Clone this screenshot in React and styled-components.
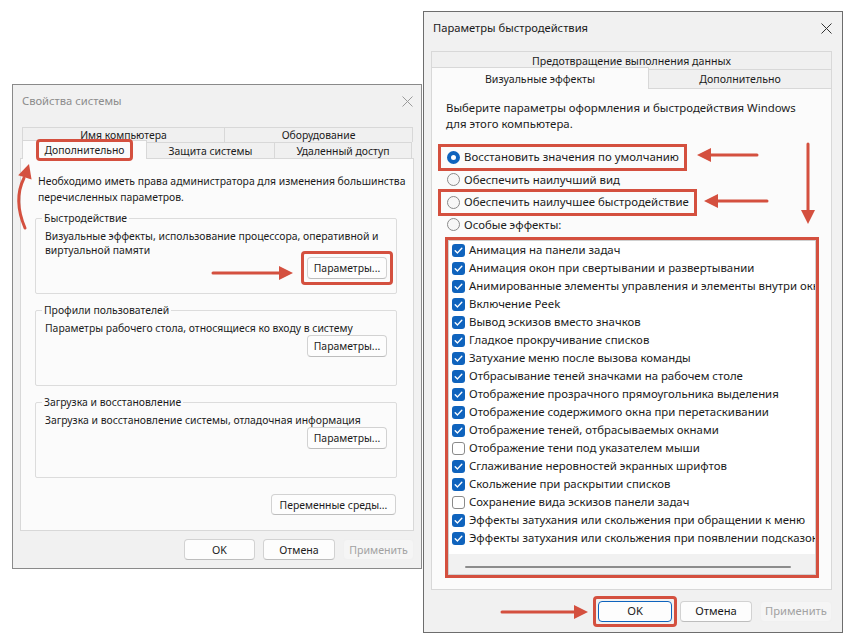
import React from 'react'
import styled, { createGlobalStyle, css } from 'styled-components'

const RED = '#d4503f'
const BLUE = '#0f63bd'

const GlobalStyle = createGlobalStyle`
  html, body { margin: 0; padding: 0; background: #fff; }
  body { font-family: "Noto Sans", "Open Sans", sans-serif; color: #1b1b1b; }
  * { box-sizing: border-box; }
`

const marked = css`
  outline: 3px solid ${RED};
  outline-offset: ${p => p.$off || 0}px;
`

// red annotation frame around a control, square-cornered, not affecting flow
const Mark = styled.span`
  display: inline-flex;
  padding: ${p => p.$pad};
  margin: ${p => p.$m};
  border-radius: 1px;
  outline: 3px solid ${RED};
`

const Canvas = styled.div`
  position: relative;
  width: 857px;
  height: 644px;
  overflow: hidden;
  background: #fff;
`

// windows sit on a free desktop canvas
const Window = styled.div`
  position: absolute;
  left: ${p => p.$x}px;
  top: ${p => p.$y}px;
  width: ${p => p.$w}px;
  display: flex;
  flex-direction: column;
  background: #f1f1f1;
  border: 1px solid ${p => (p.$active ? '#6d6d6d' : '#8a8a8a')};
  padding: 0 ${p => p.$pr}px 0 7px;
  font-size: ${p => p.$fs}px;
  line-height: ${p => p.$lh}px;
`

const TitleBar = styled.div`
  height: 32px;
  display: flex;
  align-items: center;
  justify-content: space-between;
  padding-left: ${p => p.$pl}px;
  font-size: 11.2px;
  color: ${p => (p.$dim ? '#8c8c8c' : '#1a1a1a')};
`

const Close = ({ color }) => (
  <svg width="11" height="11" viewBox="0 0 11 11">
    <path d="M0.5 0.5 L10.5 10.5 M10.5 0.5 L0.5 10.5" stroke={color} strokeWidth="1" fill="none" />
  </svg>
)

const CloseSlot = styled.span`
  display: flex;
  margin-right: ${p => p.$mr}px;
`

const Tabs = styled.div`
  display: flex;
  flex-direction: column;
  margin-top: ${p => p.$mt}px;
  padding-left: ${p => p.$pl || 0}px;
  font-size: ${p => p.$fs}px;
`

const TabRow = styled.div`
  display: flex;
  height: ${p => p.$h}px;
`

const Tab = styled.div`
  width: ${p => p.$w}px;
  display: flex;
  align-items: center;
  justify-content: center;
  border: 1px solid #d8d8d8;
  border-bottom: none;
  margin-left: -1px;
  background: ${p => (p.$active ? '#fbfbfb' : '#f0f0f0')};
  white-space: nowrap;
  ${p =>
    p.$active &&
    css`
      margin-top: -2px;
      margin-bottom: -1px;
      z-index: 1;
    `}
  &:first-child { margin-left: 0; }
`

const Panel = styled.div`
  height: ${p => p.$h}px;
  display: flex;
  flex-direction: column;
  background: #fbfbfb;
  border: 1px solid #d8d8d8;
  padding: ${p => p.$pad};
`

const Footer = styled.div`
  height: ${p => p.$h}px;
  display: flex;
  align-items: center;
  justify-content: flex-end;
  gap: 8px;
`

const Button = styled.button`
  font: inherit;
  font-size: ${p => p.$fs || 11.2}px;
  height: ${p => p.$h || 21}px;
  width: ${p => p.$w}px;
  padding: 0;
  border-radius: 4px;
  color: #1b1b1b;
  background: #fdfdfd;
  border: 1px solid #d2d2d2;
  border-bottom-color: #bdbdbd;
  ${p =>
    p.$default &&
    css`
      border: 1.5px solid ${BLUE};
    `}
  ${p =>
    p.$disabled &&
    css`
      color: #a2a2a2;
      background: #f5f5f5;
      border-color: #f0f0f0;
    `}
`

/* ---------- left window ---------- */

const Intro = styled.p`
  margin: 0;
  white-space: nowrap;
`

const Group = styled.fieldset`
  margin: ${p => p.$mt}px 0 0 -3px;
  width: 362px;
  height: 84px;
  padding: 0 9px 8px 9px;
  border: 1px solid #dcdcdc;
  border-radius: 2px;
  display: flex;
  flex-direction: column;
`

const Legend = styled.legend`
  padding: 0 2px;
  margin-left: -3px;
  line-height: 16px;
`

const GroupText = styled.p`
  margin: 3px 0 0;
  line-height: 14px;
  white-space: nowrap;
`

const GroupActions = styled.div`
  margin-top: auto;
  display: flex;
  justify-content: flex-end;
`

const EnvRow = styled.div`
  display: flex;
  justify-content: flex-end;
  width: 358px;
  margin-top: 16px;
`

/* ---------- right window ---------- */

const Radios = styled.div`
  display: flex;
  flex-direction: column;
  align-items: flex-start;
  margin-top: 14px;
`

const RadioRow = styled.div`
  height: 22.5px;
  display: flex;
  align-items: center;
  gap: 4px;
  margin-left: -6px;
  padding: 0 6px 0 7px;
  white-space: nowrap;
  ${p => p.$mark && marked}
`

const RadioDot = styled.span`
  width: 13px;
  height: 13px;
  border-radius: 50%;
  flex: none;
  ${p =>
    p.$on
      ? css`
          border: 4px solid ${BLUE};
          background: #fff;
        `
      : css`
          border: 1px solid #8a8a8a;
          background: #f7f7f7;
        `}
`

const List = styled.div`
  width: 368px;
  height: 335px;
  margin: 4px 0 0 2px;
  background: #fff;
  border: 1px solid #d0d0d0;
  display: flex;
  flex-direction: column;
  overflow: hidden;
  ${marked}
`

const Item = styled.div`
  height: 18px;
  flex: none;
  display: flex;
  align-items: center;
  gap: 4px;
  padding-left: 3px;
  white-space: nowrap;
`

const Box = styled.span`
  width: 13px;
  height: 13px;
  flex: none;
  border-radius: 3px;
  display: flex;
  align-items: center;
  justify-content: center;
  ${p =>
    p.$on
      ? css`
          background: ${BLUE};
        `
      : css`
          border: 1px solid #8a8a8a;
          background: #fff;
        `}
`

const Scroll = styled.div`
  margin-top: auto;
  height: 20px;
  flex: none;
  background: #f1f1f1;
  display: flex;
  align-items: center;
  padding: 0 24px 0 16px;
`

const Thumb = styled.div`
  flex: 1;
  height: 2px;
  margin-top: 6px;
  background: #8c8c8c;
  border-radius: 1px;
`

const Overlay = styled.svg`
  position: absolute;
  left: 0;
  top: 0;
  width: 857px;
  height: 644px;
  pointer-events: none;
`

const Check = () => (
  <svg width="9" height="9" viewBox="0 0 9 9">
    <path d="M1.2 4.7 L3.5 6.9 L7.8 2.2" stroke="#fff" strokeWidth="1.4" fill="none" strokeLinecap="round" strokeLinejoin="round" />
  </svg>
)

const head = (tx, ty, dx, dy) => {
  const len = Math.hypot(dx, dy)
  const ux = dx / len
  const uy = dy / len
  const L = 14
  const W = 7
  const bx = tx - ux * L
  const by = ty - uy * L
  return `${tx},${ty} ${bx - uy * W},${by + ux * W} ${bx + uy * W},${by - ux * W}`
}

const Arrow = ({ x1, y1, x2, y2 }) => {
  const dx = x2 - x1
  const dy = y2 - y1
  const len = Math.hypot(dx, dy)
  const ex = x2 - (dx / len) * 12
  const ey = y2 - (dy / len) * 12
  return (
    <g>
      <line x1={x1} y1={y1} x2={ex} y2={ey} stroke={RED} strokeWidth="3" strokeLinecap="round" />
      <polygon points={head(x2, y2, dx, dy)} fill={RED} />
    </g>
  )
}

const effects = [
  ['Анимация на панели задач', true],
  ['Анимация окон при свертывании и развертывании', true],
  ['Анимированные элементы управления и элементы внутри окна', true],
  ['Включение Peek', true],
  ['Вывод эскизов вместо значков', true],
  ['Гладкое прокручивание списков', true],
  ['Затухание меню после вызова команды', true],
  ['Отбрасывание теней значками на рабочем столе', true],
  ['Отображение прозрачного прямоугольника выделения', true],
  ['Отображение содержимого окна при перетаскивании', true],
  ['Отображение теней, отбрасываемых окнами', true],
  ['Отображение тени под указателем мыши', false],
  ['Сглаживание неровностей экранных шрифтов', true],
  ['Скольжение при раскрытии списков', true],
  ['Сохранение вида эскизов панели задач', false],
  ['Эффекты затухания или скольжения при обращении к меню', true],
  ['Эффекты затухания или скольжения при появлении подсказок', true],
]

const radios = [
  ['Восстановить значения по умолчанию', true, true],
  ['Обеспечить наилучший вид', false, false],
  ['Обеспечить наилучшее быстродействие', false, true],
  ['Особые эффекты:', false, false],
]

const groups = [
  {
    title: 'Быстродействие',
    lines: ['Визуальные эффекты, использование процессора, оперативной и', 'виртуальной памяти'],
    mark: true,
    mt: 5,
  },
  { title: 'Профили пользователей', lines: ['Параметры рабочего стола, относящиеся ко входу в систему'], mt: 8 },
  { title: 'Загрузка и восстановление', lines: ['Загрузка и восстановление системы, отладочная информация'], mt: 8 },
]

const SettingsButton = ({ mark }) => {
  const btn = (
    <Button $w={80} $h={22} $fs={10.4}>
      Параметры...
    </Button>
  )
  return mark ? (
    <Mark $pad="3px" $m="-3px">
      {btn}
    </Mark>
  ) : (
    btn
  )
}

const SystemProperties = () => (
  <Window $x={12} $y={84} $w={410} $pr={7} $fs={10.4} $lh={16}>
    <TitleBar $dim $pl={2}>
      Свойства системы
      <CloseSlot $mr={1}>
        <Close color="#9a9a9a" />
      </CloseSlot>
    </TitleBar>
    <Tabs $mt={10} $pl={2} $fs={10.4}>
      <TabRow $h={15}>
        <Tab $w={203}>Имя компьютера</Tab>
        <Tab $w={189}>Оборудование</Tab>
      </TabRow>
      <TabRow $h={16}>
        <Tab $w={125} $active>
          <Mark $pad="0 6px" $m="0">
            Дополнительно
          </Mark>
        </Tab>
        <Tab $w={129}>Защита системы</Tab>
        <Tab $w={138}>Удаленный доступ</Tab>
      </TabRow>
    </Tabs>
    <Panel $h={373} $pad="14px 6px 0 17px">
      <Intro>
        Необходимо иметь права администратора для изменения большинства
        <br />
        перечисленных параметров.
      </Intro>
      {groups.map(g => (
        <Group key={g.title} $mt={g.mt}>
          <Legend>{g.title}</Legend>
          <GroupText>
            {g.lines.map((l, i) => (
              <React.Fragment key={l}>
                {i > 0 && <br />}
                {l}
              </React.Fragment>
            ))}
          </GroupText>
          <GroupActions>
            <SettingsButton mark={g.mark} />
          </GroupActions>
        </Group>
      ))}
      <EnvRow>
        <Button $w={125} $fs={10.4}>
          Переменные среды...
        </Button>
      </EnvRow>
    </Panel>
    <Footer $h={37}>
      <Button $w={71} $fs={10.6}>OK</Button>
      <Button $w={72} $fs={10.6}>Отмена</Button>
      <Button $w={71} $fs={10.6} $disabled>
        Применить
      </Button>
    </Footer>
  </Window>
)

const PerformanceOptions = () => (
  <Window $x={423} $y={11} $w={420} $pr={10} $fs={11.4} $lh={16} $active>
    <TitleBar $pl={2}>
      Параметры быстродействия
      <CloseSlot $mr={0}>
        <Close color="#333" />
      </CloseSlot>
    </TitleBar>
    <Tabs $mt={7} $fs={10.6}>
      <TabRow $h={18}>
        <Tab $w={401}>Предотвращение выполнения данных</Tab>
      </TabRow>
      <TabRow $h={19}>
        <Tab $w={218} $active>
          Визуальные эффекты
        </Tab>
        <Tab $w={184}>Дополнительно</Tab>
      </TabRow>
    </Tabs>
    <Panel $h={502} $pad="11px 14px 0 14px">
      <Intro>
        Выберите параметры оформления и быстродействия Windows
        <br />
        для этого компьютера.
      </Intro>
      <Radios>
        {radios.map(([label, on, mark]) => (
          <RadioRow key={label} $mark={mark} $off={-1}>
            <RadioDot $on={on} />
            {label}
          </RadioRow>
        ))}
      </Radios>
      <List>
        {effects.map(([label, on]) => (
          <Item key={label}>
            <Box $on={on}>{on && <Check />}</Box>
            {label}
          </Item>
        ))}
        <Scroll>
          <Thumb />
        </Scroll>
      </List>
    </Panel>
    <Footer $h={42}>
      <Mark $pad="2px" $m="-2px">
        <Button $w={74} $default>
          OK
        </Button>
      </Mark>
      <Button $w={72}>Отмена</Button>
      <Button $w={72} $disabled>
        Применить
      </Button>
    </Footer>
  </Window>
)

export default function App() {
  return (
    <Canvas>
      <GlobalStyle />
      <SystemProperties />
      <PerformanceOptions />
      <Overlay viewBox="0 0 857 644">
        <path d="M25 228 Q13 200 24 178" stroke={RED} strokeWidth="3" fill="none" strokeLinecap="round" />
        <polygon points={head(29, 164, 4, -13)} fill={RED} />
        <Arrow x1={213} y1={273} x2={293} y2={273} />
        <Arrow x1={757} y1={155} x2={697} y2={155} />
        <Arrow x1={767} y1={201} x2={704} y2={201} />
        <Arrow x1={808} y1={144} x2={808} y2={224} />
        <Arrow x1={502} y1={612} x2={588} y2={612} />
      </Overlay>
    </Canvas>
  )
}
